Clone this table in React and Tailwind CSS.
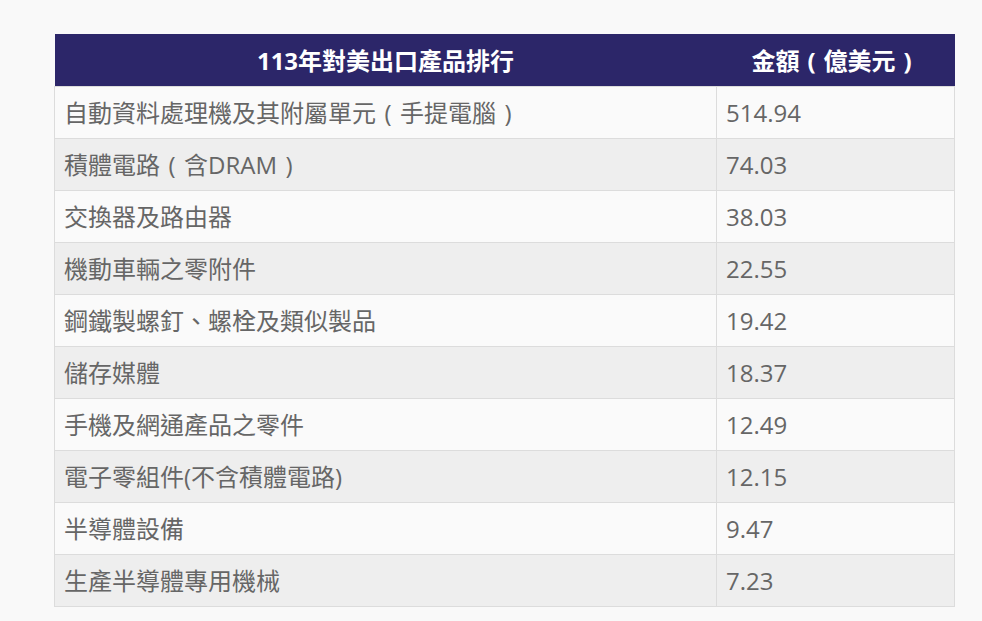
const P = ({ c }) => (
  <span className="inline-block w-[1em] text-center">{c}</span>
);

const rows = [
  [<>自動資料處理機及其附屬單元<P c="(" />手提電腦<P c=")" /></>, "514.94"],
  [<>積體電路<P c="(" />含DRAM<P c=")" /></>, "74.03"],
  ["交換器及路由器", "38.03"],
  ["機動車輛之零附件", "22.55"],
  ["鋼鐵製螺釘、螺栓及類似製品", "19.42"],
  ["儲存媒體", "18.37"],
  ["手機及網通產品之零件", "12.49"],
  ["電子零組件(不含積體電路)", "12.15"],
  ["半導體設備", "9.47"],
  ["生產半導體專用機械", "7.23"],
];

export default function App() {
  return (
    <div
      className="min-h-screen w-full bg-[#f9f9f9] pt-[34px] pl-[54px]"
      style={{ fontFamily: '"Open Sans", "Noto Sans CJK TC", sans-serif' }}
    >
      <table className="w-[900px] border-collapse table-fixed">
        <colgroup>
          <col className="w-[662px]" />
          <col className="w-[238px]" />
        </colgroup>
        <thead>
          <tr className="bg-[#2c2669] text-white">
            <th className="h-[52px] p-0 pt-[2px] text-center text-[24px] font-bold leading-none">
              113年對美出口產品排行
            </th>
            <th className="h-[52px] p-0 pt-[2px] text-center text-[24px] font-bold leading-none">
              金額<P c="(" />億美元<P c=")" />
            </th>
          </tr>
        </thead>
        <tbody>
          {rows.map(([name, amount], i) => (
            <tr key={amount} className={i % 2 === 0 ? "bg-[#fafafa]" : "bg-[#eeeeee]"}>
              <td className="h-[52px] border border-[#dcdcdc] pl-[9px] pt-[2px] text-[24px] leading-none text-[#666666]">
                {name}
              </td>
              <td className="h-[52px] border border-[#dcdcdc] pl-[9px] pt-[2px] text-[24px] leading-none text-[#666666]">
                {amount}
              </td>
            </tr>
          ))}
        </tbody>
      </table>
    </div>
  );
}
